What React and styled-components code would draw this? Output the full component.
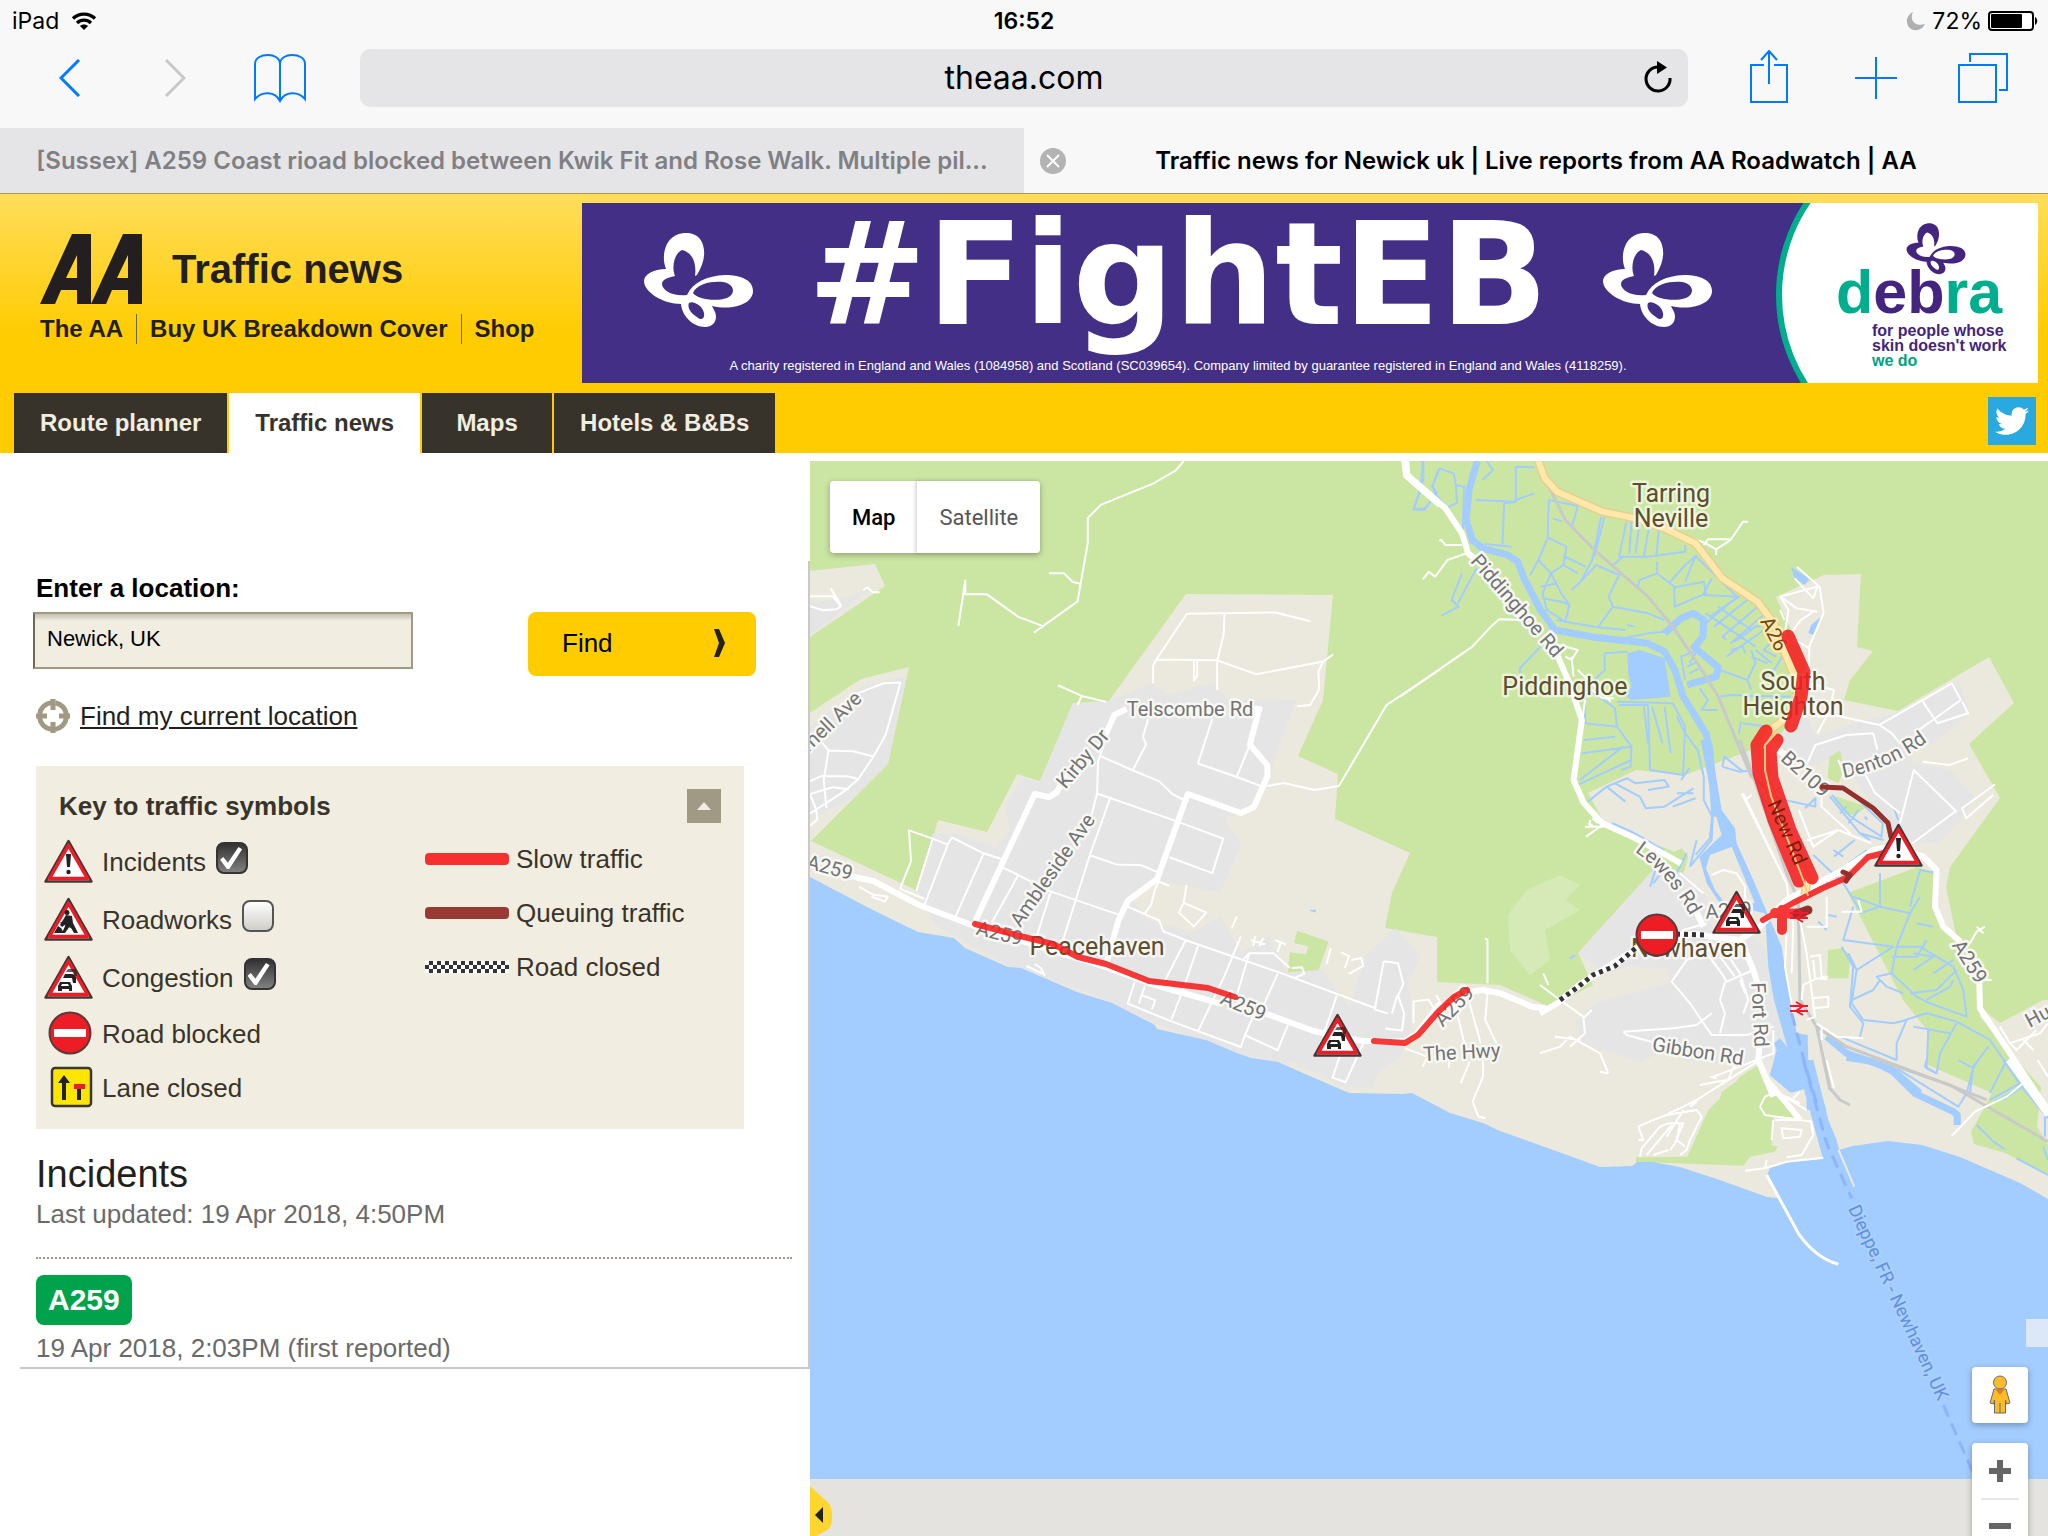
import React, { useState } from "react";
import styled, { createGlobalStyle } from "styled-components";
import { FaTwitter } from "react-icons/fa";

const GlobalStyle = createGlobalStyle`
	* {
		box-sizing: border-box;
	}
	body {
		margin: 0;
		background: #fff;
		font-family: "Liberation Sans", Arial, sans-serif;
	}
	button {
		border: 0;
		padding: 0;
		background: none;
		font-family: inherit;
	}
	h1, h2, p, ul {
		margin: 0;
		padding: 0;
		font-weight: normal;
	}
	a {
		color: inherit;
		text-decoration: none;
	}
`;

/* ---------- browser chrome ---------- */

const StatusBar = () => (
	<Status>
		<StatusSide>
			iPad
			<svg width="26" height="20" viewBox="0 0 26 20">
				<g fill="none" stroke="#000" strokeWidth="3.4">
					<path d="M2 7.5C8 1.6 18 1.6 24 7.5" />
					<path d="M6 12C10 8.2 16 8.2 20 12" />
				</g>
				<path d="M13 19L9 15C11 13 15 13 17 15Z" />
			</svg>
		</StatusSide>
		<Clock>16:52</Clock>
		<StatusSide $end>
			<svg width="20" height="20" viewBox="0 0 20 20">
				<path d="M7 1C-1 5-1 15 6 18.500C11 20.500 17 18 19 13C9 16 3 9 7 1Z" fill="#b0b0b0" />
			</svg>
			<span>72%</span>
			<svg width="50" height="20" viewBox="0 0 50 20">
				<rect x="1" y="1" width="44" height="18" rx="3" fill="#fff" stroke="#000" strokeWidth="2" />
				<rect x="3" y="3" width="31" height="14" rx="1" />
				<path d="M47 6C50 8 50 12 47 14Z" />
			</svg>
		</StatusSide>
	</Status>
);

const Toolbar = () => (
	<Tools>
		<Tool $w={105} aria-label="Back">
			<svg width="22" height="38" viewBox="0 0 22 38">
				<path d="M20 1L2 19L20 37" strokeWidth="3" />
			</svg>
		</Tool>
		<Tool $w={105} $off aria-label="Forward">
			<svg width="22" height="38" viewBox="0 0 22 38">
				<path d="M2 1L20 19L2 37" strokeWidth="3" />
			</svg>
		</Tool>
		<Tool $w={105} aria-label="Bookmarks">
			<svg width="52" height="50" viewBox="0 0 52 50">
				<path
					d="M26 48V11C26 5 20 2 14 2C7 2 1 5 1 11V46C8 38 21 38 26 48C31 38 44 38 51 46V11C51 5 45 2 38 2C32 2 26 5 26 11"
					strokeWidth="2"
				/>
			</svg>
		</Tool>
		<Address>
			<AddressInput aria-label="Address" defaultValue="theaa.com" />
			<Reload aria-label="Reload">
				<svg width="30" height="32" viewBox="0 0 30 32">
					<path d="M27 17A12 12 0 1 1 15 6" fill="none" stroke="#000" strokeWidth="3" />
					<path d="M14 0L24 6.500L14 13Z" />
				</svg>
			</Reload>
		</Address>
		<Tool $w={107} aria-label="Share">
			<svg width="40" height="56" viewBox="0 2 40 56">
				<path d="M15 17H2V54H38V17H25M20 36V4M12 12L20 3L28 12" strokeWidth="2" />
			</svg>
		</Tool>
		<Tool $w={107} aria-label="New tab">
			<svg width="42" height="42" viewBox="0 0 42 42">
				<path d="M21 0V42M0 21H42" strokeWidth="2" />
			</svg>
		</Tool>
		<Tool $w={107} aria-label="Show tabs">
			<svg width="50" height="50" viewBox="0 0 50 50">
				<path d="M1 12H38V49H1ZM12 9V1H49V37H41" strokeWidth="2" />
			</svg>
		</Tool>
	</Tools>
);

/* ---------- drawings ---------- */

const Butterfly = ({ width, height, color }) => (
	<svg width={width} height={height} viewBox="0 0 111 95" fill={color} fillRule="evenodd" aria-hidden="true">
		<path d="M54 42C60 32 63 22 60 12C56-4 32-4 24 11C20 19 20 28 23 36C11 36 1 41 1 48C1 59 20 71 38 71C39 83 50 94 62 94C71 94 75 86 72 79L69 73C92 78 110 70 110 58C110 47 98 42 82 42C64 43 50 49 44 62C30 64 19 57 19 51C19 46 27 44 32 43C28 33 32 20 39 17C48 19 54 28 52 43ZM50 60C54 50 70 48 80 49C92 51 93 61 84 65C72 69 54 66 50 60ZM46 70C50 67 60 73 61 80C62 86 58 88 54 84C48 80 44 75 46 70Z" />
	</svg>
);

const Logo = () => (
	<svg width="102" height="72" viewBox="0 0 102 72" fill="#231f20" fillRule="evenodd" role="img" aria-label="AA">
		<path d="M0 71L32 1H51V71H37V57H21L15 71ZM26 45H37V22Z" />
		<path d="M51 71L83 1H102V71H88V57H72L66 71ZM77 45H88V22Z" />
	</svg>
);

const glyphs = {
	incident: (
		<>
			<path d="M22 15H27L26 28H23Z" fill="#222" />
			<circle cx="24.500" cy="33" r="2.200" fill="#222" />
		</>
	),
	works: (
		<g fill="#222">
			<circle cx="23" cy="15.500" r="2.500" />
			<path d="M22 18L28 19L29 26L34 36H30L26 29L21 36H18L22 27L18 30L16 28Z" />
			<path d="M10 36L14 29L17 31L20 36ZM17 25L30 31L29 32L16 26Z" />
		</g>
	),
	queue: (
		<g fill="#222">
			<path d="M24 14H31L33 17V21H30V17H22Z" opacity=".7" />
			<path d="M21 19H29L32 22V28H29L28 23H19Z" />
			<path d="M16 27H26L28 31V36H25V34H18V36H14V31ZM18 29L17 31H25L24 29Z" fillRule="evenodd" />
		</g>
	),
};

const Sign = ({ kind, x, y }) => {
	if (kind === "blocked")
		return (
			<svg x={x} y={y} width="49" height="44" viewBox="0 0 49 44">
				<circle cx="26" cy="22" r="20.500" fill="#ee1c25" stroke="#5a3a3a" strokeWidth="2" />
				<path d="M10 18H42V26H10Z" fill="#fff" />
			</svg>
		);
	if (kind === "lane")
		return (
			<svg x={x} y={y} width="49" height="44" viewBox="0 0 49 44">
				<rect x="8" y="3" width="39" height="38" rx="3" fill="#ffe600" stroke="#3a372c" strokeWidth="2.500" />
				<path d="M18 35V18H14L20 10L26 18H22V35ZM33 24H37V35H33Z" fill="#222" />
				<path d="M30 19H41V24H30Z" fill="#ee1c25" />
			</svg>
		);
	return (
		<svg x={x} y={y} width="49" height="44" viewBox="0 0 49 44">
			<path d="M24.500 2L47.500 42.500H1.500Z" fill="#fff" stroke="#4a3434" strokeWidth="2.500" strokeLinejoin="round" />
			<path d="M24.500 6.500L43.500 39.500H5.500Z" fill="#fff" stroke="#ee1c25" strokeWidth="3.500" strokeLinejoin="round" />
			{glyphs[kind]}
		</svg>
	);
};

/* ---------- map ---------- */

// survey sheets: origin and scale on the map, then one path per layer
const sheets = [
	{
		at: "translate(0 0)",
		green:
			"M810 461H2048V1000L2043 1000L2000 1023L1983 1010L1977 987L1957 940L1946 887L1950 867L2000 798L1969 744L2014 703L1989 657L1898 711L1844 700L1850 680L1873 651L1857 647L1861 574L1824 575L1776 597L1805 660L1805 700L1790 737L1751 750L1685 775L1636 770L1588 793L1607 827L1665 848L1687 857L1655 868L1578 953L1593 985L1550 1007L1500 985L1437 982V937L1385 928L1392 893L1410 853L1335 819L1338 774L1298 756L1323 700L1333 595L1186 594L1108 702L1073 703L1040 781L1017 774L987 832L938 820L918 891L811 841L888 764L909 667L861 679L810 713V637L885 586L875 564L810 571ZM1848 893L1917 867L1937 873L1935 910L1957 940L1977 980L1980 1017L2017 1060L2041 1087L2037 1127L2048 1145V1175L2005 1153L1974 1144L1971 1132L1992 1093L1928 1065L1927 1030L1903 1000Z",
		pale: "M1527 890L1560 875L1580 885L1565 900L1580 910L1545 930L1550 960L1530 975L1510 950L1508 915Z",
		water:
			"M810 877L867 907L885 916L918 932L954 938L965 948L1008 967L1021 968L1077 992L1112 1003L1155 1025L1157 1029L1206 1040L1237 1053L1251 1058L1278 1062L1296 1070L1349 1093L1403 1094L1412 1093L1450 1113L1483 1123L1500 1131L1567 1155L1600 1167L1632 1166L1637 1162L1653 1162L1680 1167L1717 1179L1767 1197L1778 1198L1767 1175L1770 1168L1790 1162L1823 1159L1836 1138L1839 1150L1853 1146L1888 1141L1922 1145L1960 1157L2020 1183L2048 1199V1479H810Z",
	},
	{
		at: "translate(800 450) scale(.4082 .3954)",
		green:
			"M690 800L685 930L590 1035L655 880L640 860ZM1060 693L1076 697L1062 740L1045 735ZM1218 1216L1295 1243L1262 1340L1195 1325L1200 1270L1240 1275L1245 1255L1210 1247ZM710 1300L785 1345L745 1382L693 1365Z",
		built:
			"M24 385L110 375L180 345L24 470ZM24 700L150 600L262 570L215 793L130 880L24 935ZM668 640L760 635L860 590L900 620L1010 590L1050 630L1215 632L1145 830L1110 910L1040 930L1080 1000L1030 1120L880 1090L810 1130L850 1190L960 1220L1030 1180L1080 1270L1150 1230L1190 1320L1200 1568L1060 1520L870 1450L700 1370L500 1300L330 1200L290 1115L325 970L380 970L480 1005L515 960L500 900L545 830L590 840ZM640 860L690 800L685 930L590 1035Z",
		lane:
			"M940 28L920 52L865 85L738 138L705 172V235L680 383L573 462M388 445L405 330V365H458L535 422L597 446M610 312H647L668 334L685 338M24 370L80 370L100 395L90 403L55 405L24 395M75 350L100 392M155 355L165 347L178 360L195 360M24 838L52 825L115 825L143 832M143 615L205 590L246 588L210 720L180 775L143 832L110 862L24 920M52 738L70 760L130 762L180 775M70 760L58 835L65 905M24 870L80 853L120 858M24 870L40 910L42 935L24 950M865 590V545L873 530L948 414L1165 411L1250 433M1040 414L1038 465L1022 535V607M873 530L1022 532L1118 567L1282 535L1306 517M1282 535L1270 560L1272 605L1250 645L1218 648M965 530V585M973 532V570L965 585M632 595L690 622L750 637M690 622L680 645M738 775L815 810L880 838L912 870L945 888M853 680L840 725L848 745L815 810M1010 680L975 793L1070 827L1130 850M1100 750L1070 827M745 740L730 790L728 868L710 940M725 868L760 880L925 940L1037 983L1010 1070L905 1030M760 880L710 1025L635 1270M710 1025L775 1048L835 1050L875 1067M245 1110L272 1040L267 962L325 983L362 998M325 983L285 1115M362 998L372 980L450 1020L495 1035M362 998L305 1150M450 1020L380 1182M495 1055L535 1075L610 1115L780 1175M535 1075L470 1195M615 1115L580 1230M245 1110L305 1135M803 1155L880 1190L890 1217L945 1240L1170 1320L1410 1412M945 1240L890 1350M975 1255L940 1360L910 1440M1100 1275L1070 1380M1170 1325L1120 1440M1080 1230L1040 1330L975 1470M1085 1290L1100 1273H1160L1200 1310M880 1090L870 1110L860 1150L843 1175M875 1090L905 1102M947 1100L940 1145L928 1170L965 1205L995 1170L940 1145M1070 1180L1058 1210M820 1345L803 1400L910 1445L1080 1510L1090 1480L1170 1518L1195 1455M845 1355L830 1400M840 1380L870 1392L862 1415M1090 1480L1120 1410M1315 1380L1285 1470M1115 1230L1110 1255M1135 1235L1125 1255M1105 1240L1140 1250M1165 1240L1190 1250M1178 1245L1170 1270M1205 1310L1230 1308L1235 1325L1210 1335M1300 1260L1290 1300M1325 1270L1345 1280L1335 1310M1350 1290L1375 1285L1380 1305L1345 1325M1430 1293L1465 1298L1478 1350L1465 1380L1480 1425L1475 1468L1433 1463M1430 1293L1408 1415L1440 1425M1450 1425L1463 1380M1503 1450V1395L1540 1390L1555 1415M1145 850L1185 842L1260 860L1320 850L1437 645L1568 555M145 1105L180 1125L215 1130L208 1142L175 1130M575 1300L590 1310L600 1330M555 1305L595 1325",
		road: "M110 1075L180 1090L290 1150L430 1205L750 1308L860 1350L1030 1400M1140 1425L1260 1470L1380 1495L1480 1495L1510 1478L1568 1400M430 1190L575 870L610 878L630 865L650 820M740 740L770 670L800 655M1112 655H1125L1102 745L1145 797V825L1112 903L1080 918L950 870L875 1085L803 1140L780 1190L750 1300M1480 28L1485 65L1568 140",
		stream: "M1527 28V75L1503 150L1530 148L1560 110L1550 90L1565 50",
		water: "M1250 1163H1264V1170L1250 1166Z",
	},
	{
		at: "translate(800 840) scale(.4464 .3333)",
		built: "M1050 400L1170 390L1230 500L1270 340L1335 265L1365 310L1390 350L1365 420L1370 560L1345 650L1300 690L1280 745L1220 740L1060 640L1000 600Z",
		lane:
			"M1210 645L1193 713L1222 727L1262 610M1355 625L1405 650L1395 680M1455 660L1453 685M1500 665L1480 730M1530 660L1530 710L1507 785L1520 830L1535 835M1470 510L1490 620M1500 490L1525 610M1540 460L1535 540L1560 610M1425 465L1440 500M1540 430V300L1535 295",
		road: "M1470 480L1500 455L1530 450L1568 460L1640 500L1670 505",
	},
	{
		at: "translate(1400 450) scale(.4133 .3333)",
		green: "M1040 905L1065 900L1075 960L1060 1000L1035 985ZM1045 1035L1130 1070L1100 1095L1070 1090Z",
		built:
			"M915 860L950 810L985 805L1010 860L1100 820L1200 790L1350 690L1380 790L1290 880L1230 900L1240 940L1330 960L1390 1040L1350 1120L1300 1180L1200 1170L1120 1020L1085 960L1065 900L1010 945L940 930Z",
		water:
			"M550 610L580 600L640 625L655 740L560 750L545 735L560 710L552 670ZM945 350L990 385L980 405L955 385ZM1017 502L1000 555L988 550L995 525Z",
		river:
			"M187 33L167 120L160 210L175 270L200 295L260 315L285 335L300 385L340 480L375 540L470 562L600 580L640 605L665 660L685 740L740 850L750 900L755 980L762 1100M640 550L680 505L710 490L735 510L733 560L712 592L770 652L765 680L695 705",
		stream:
			"M210 33L225 60L200 90M95 55L130 70L135 105L155 110L152 240M95 55L78 110L90 140L115 172L138 158L135 105M55 33L50 120L33 178L60 180L85 130M280 50V150L325 130M280 50L325 52M183 150L280 155L252 160L248 283M205 282L270 290M360 150L357 265L335 330L315 375M360 150L420 165L430 170L415 235M357 262L403 290L395 345L365 370L335 330M395 318L450 350M395 345L430 370M365 370L390 430L410 465L400 515L380 510M365 370L345 430L355 480L400 515L470 530L545 540M340 410L380 400M345 445L390 455L410 465M487 200L465 330L437 395L415 420M495 200L470 320M437 395L475 345L530 375L505 440L515 470L480 530M370 205L392 215M548 215L530 320L600 320L650 312L690 305V285M560 215L555 310M580 215L570 310M605 215L590 320M628 220L620 320M515 345L540 320M622 335V370L580 390L575 410M622 370L665 412L735 395L740 430L665 470L663 412M650 400L690 345L715 318L690 395M715 318L815 440M755 385L735 430M515 470L600 490L640 510M550 525L568 530M640 545L600 550L520 570M735 435L820 440L750 500M815 440L740 520M840 450L760 530M865 470L780 560L790 570M885 490L800 580M900 520L860 530L810 575M740 490L860 590M770 470L850 540M880 540L790 620M910 560L880 600L910 620M860 600L900 640M930 610L905 660L885 680M850 600L860 640L840 690L775 660M800 600L830 590L835 610M775 740L800 735L855 738L945 740M840 690L850 720M890 640L850 620M465 725L520 775L525 830L560 890L558 950L535 960M448 740V820L525 830M445 870L520 860M525 755L660 760M530 765L600 765L605 960L685 975L690 830L660 760M590 770L600 880M610 770L635 880M640 770L655 910M440 910L560 890M430 1005L560 930M435 990L540 890M670 800L690 850L720 900L735 980V1050L755 1100L750 1165L715 1215M700 640L720 600L680 620L690 690M695 650L720 635M700 670L725 655M725 715L745 750L730 780L768 780M290 670V655L340 590M495 610L550 605M495 610L495 660L470 690M150 370L125 450L142 470L100 497M185 355L140 460M780 950L820 965L840 963M780 950L785 920L830 965M825 815L820 850M830 820L890 830M455 1055L500 1010L550 985L570 1000L640 990L650 1010L600 1020M500 1010L545 1055M520 1000L580 1040L595 1075L640 1070L710 1015M670 1030L710 1030M700 955L680 990M660 1070L715 1045M920 1010L900 1035L930 1050L1005 1070L1005 1045L980 1075M1045 1035L1090 1100L1165 1160L1168 1120L1100 1040M1085 1120L1110 1080M1125 1100L1130 1110M1050 1220L1100 1170M1085 1240L1130 1200M515 1120L560 1145L610 1180",
		rail: "M360 110L400 210L470 300L600 440L660 530L720 640L770 740L850 980L880 1010",
		lane:
			"M150 285L110 285L100 270L95 272M160 310L115 330L85 380L70 365L55 388M300 510L240 508L220 530L175 590L0 740M385 585L430 600L415 630L400 620M415 620L420 680M430 660L510 755M490 745H518M465 720L490 745M448 750L440 820M710 265L740 280L765 298L800 270L830 215H842M735 285L745 268H800M765 298V315M960 350L1015 410L1025 490L990 590V700L1050 720L1040 780L1010 850M955 385L1000 445L1010 410L920 440L960 475L1010 485M920 440L940 480L930 560M920 480L930 510M1000 485L970 510L945 550M950 570L970 580L990 595M1010 800L1050 795L1160 825L1335 700L1357 750L1255 840M1265 755L1300 820M1160 825L1190 850L1210 880M1145 850L1080 855L1005 885L985 940M1145 850L1155 900M1360 755L1375 790L1300 820M1120 960L1150 1030L1210 1090M1210 1120L1243 960L1345 1083L1240 1180M1265 935L1330 945L1375 925M1440 1003L1360 1075L1370 1105L1435 1035M965 1080L1000 1190L1060 1140M1020 1040L1020 1070L1090 1150M985 1170L1060 1140L1140 1180M830 1030L920 1260M1060 930L1075 970M490 1125L450 1160M455 1120L470 1130M465 1105L480 1120",
		road: "M15 33L18 75L110 175L150 250L165 310L190 335M375 600L410 700L440 810L420 990L445 1060L490 1120L570 1165L680 1240M900 890L940 920",
		main: "M335 33L350 85L380 125L490 185L570 205L640 235L715 280L780 385L865 455L905 520L925 590L955 680L962 740L940 800L895 840L878 880L885 980L910 1080L985 1290L980 1335",
	},
	{
		at: "translate(1540 740) scale(.3333)",
		green: "M864 630L905 625L932 645L925 715H862ZM540 1090L600 1010L655 975L690 1050L720 1100L700 1120H540ZM430 680L450 675L460 700L435 710ZM385 345L425 325L445 350L430 400L380 380Z",
		built:
			"M115 640L345 385L440 405L500 470L520 590L640 590L690 640L700 780L742 920L700 960L540 970L430 960L380 930L300 965L130 910L105 850L165 790L390 730L380 685L260 680L200 700Z",
		water:
			"M482 0L520 200L545 285L478 350L500 430L540 490L675 520L685 680L702 780L742 922L720 895L702 910L710 930L690 1005L755 1058L800 1045V1110H860L805 960L803 885L770 880L740 720L725 620L680 515L640 420L590 310L585 265L545 210L510 0ZM575 320L510 345L498 385L525 450L555 490L645 490Z",
		stream:
			"M520 200L515 300L450 380M470 300L450 380M215 250L300 290L370 330L350 380L330 440M340 430L380 375M90 655L105 645M440 340L410 400M865 525L890 530M835 545L860 570M905 620L940 680L930 800L970 850L960 890M925 640L950 690L935 790L970 840L1060 850L1100 840L1070 910V960L900 890M870 170L960 280L1030 300M900 220L920 200M960 280L990 300M820 345L910 430L960 510M880 330L910 350M885 410L910 390M940 470L1020 500L1110 520L1140 470M1020 400L1020 500L960 520M1110 520L1070 620L1055 700L1130 770L1170 790L1280 830L1270 750L1240 680L1140 620L1070 620M1130 550L1180 560M1055 650L1130 650L1160 600M950 690L1060 620L910 600L940 500M1180 700L1240 660M1110 760L1190 750L1250 690M1160 780L1230 740L1240 720M1055 700L1010 710L1040 740L1090 760M935 780L1000 750L1020 720M1120 640L1180 650L1120 690M1095 840L1160 820L1250 845L1350 900L1440 1030M1165 870L1160 985L1190 1000L1200 940L1250 850M1120 860L1230 880M1345 920L1300 980L1290 1060M1400 960L1350 1060M1440 1030L1350 1080M1190 400L1140 390L1110 500M860 440L860 420M1060 200L1075 240",
		river: "M860 890L920 940L1050 985L1140 1060",
		rail:
			"M600 0L640 110L740 400L775 480L780 780L830 860L870 1050M830 860L920 920L1240 1040L1340 1080",
		lane:
			"M605 160L740 430L745 470L735 680L760 820M615 180L635 165M750 480L760 560L755 700M780 540L800 640L825 830L800 840M740 480L700 520M800 560H860V470M810 650L840 645L845 710L865 710M820 660L825 715M785 780L790 735L830 715L862 718M820 775L865 770V800L820 805ZM845 860V900M830 850L890 890L970 895M905 515H965L955 480M515 405L550 390L590 400L615 440V480M420 400L490 460M500 550L430 570V585M555 590L495 640L440 660L395 725L450 790L515 885H620L700 860M555 725L540 780L555 820L540 880M500 640L545 700L560 725L640 690M540 650L585 710M560 640L600 700L625 780L610 820M250 875L400 865L470 855L515 820M250 875L260 885L350 910L380 900M520 1010L600 980L700 940V870M600 720L615 760M0 735L60 780L130 830L135 880L90 920M10 700L25 735M130 835L155 810M45 890L120 900M0 940L60 920L90 890L180 940L205 1000M135 260L190 260M150 260L150 240M1380 860L1410 910L1500 880L1524 850M1410 910L1430 930L1490 870M1450 900L1480 930M1290 610L1310 575L1335 560M1310 560L1330 580M1310 720H1355",
		road: "M0 820L60 785L110 740L290 625L460 582L500 588L600 600L660 560L740 480L900 395L1000 330L1060 320L1150 350L1190 390L1185 500L1210 560L1262 605M1318 720L1320 805L1500 1075L1524 1110M460 495L490 560M600 595L640 690L658 750M658 920L655 960L700 1070",
		ferry: "M755 820L800 990L830 1090",
	},
	{
		at: "translate(1600 1060) scale(.3333)",
		green:
			"M365 95L480 15L585 172L520 170L515 255L533 260L525 275L450 290L430 317L108 305V292L262 290L325 150L360 115Z",
		water: "M525 0H640L685 180L708 235L718 280L670 300L610 80L595 78L570 97L510 45Z",
		stream:
			"M1075 0L1120 25L1135 0M1120 25L1100 100L1075 140L890 25M980 0L975 20L1010 40M1185 125L1265 80L1210 0M1265 80L1344 175M1210 120L1280 70M1130 195L1180 245L1215 268M1250 295L1344 345M1335 170V230M1330 260L1344 300",
		river: "M740 -8L820 5L880 35L945 100L1060 155L1072 165V195",
		rail: "M820 -5L1050 75L1344 245M670 -5L690 85L720 120L750 135",
		lane:
			"M480 0L400 50L290 120L240 145L205 160M300 75L350 65L385 60L400 20L430 15M330 50L350 55M115 200L130 240L115 240M115 200L160 180L200 165L290 150L305 170L270 240L260 270L240 285M120 290L125 265L180 200L205 190L250 190L225 250L210 270M140 285L190 225L215 195M160 285L205 270M250 150L200 230M270 140L290 125M240 190L230 240L255 260M0 35L25 40M480 140L495 165L600 180L635 185L640 225L605 285L560 292M520 180L515 240M525 180H600M545 205L605 210L600 230L550 235ZM480 140L495 110L530 95L620 150M560 110L600 130M600 95L580 115M640 225L630 180M435 332L495 325L500 300M495 325L560 305L670 293M680 0L702 85M1055 228L1125 155L1220 110L1275 65M1313 0L1344 50",
		road: "M475 0L500 60L560 130L600 180M1225 0L1344 165",
		pier: "M500 345L595 520C630 570 670 600 715 613",
		jetty: "M716 270L763 380",
		ferry: "M610 0L680 250L755 415M1030 1035L1120 1240",
	},
];

const layers = [
	["green", { fill: "#cbe6a3" }],
	["pale", { fill: "#d6eab8" }],
	["built", { fill: "#e5e5e5" }],
	["water", { fill: "#a3ccff", fillRule: "evenodd" }],
	["river", { stroke: "#a3ccff", strokeWidth: 7 }],
	["stream", { stroke: "#a3ccff", strokeWidth: 2 }],
	["rail", { stroke: "#c8c9c9", strokeWidth: 3 }],
	["lane", { stroke: "#fff", strokeWidth: 2 }],
	["road", { stroke: "#fff", strokeWidth: 6 }],
	["pier", { stroke: "#fff", strokeWidth: 3 }],
	["jetty", { stroke: "#ebe8dd", strokeWidth: 2 }],
	["ferry", { stroke: "#8db5fa", strokeWidth: 3, strokeDasharray: "13 7" }],
	["main", { stroke: "#e5cf91", strokeWidth: 9 }],
	["main", { stroke: "#ffe8a9", strokeWidth: 6 }],
];

const roadNames = [
	["Telscombe Rd", 1190, 716, 0],
	["Kirby Dr", 1088, 763, -50],
	["Ambleside Ave", 1058, 874, -55],
	["A259", 828, 874, 15],
	["A259", 998, 940, 14],
	["A259", 1241, 1012, 22],
	["A259", 1459, 1011, -46],
	["The Hwy", 1462, 1059, -3],
	["Piddinghoe Rd", 1512, 610, 49],
	["B2109", 1801, 779, 42],
	["A259", 1729, 917, -4],
	["Fort Rd", 1753, 1015, 87],
	["Gibbon Rd", 1697, 1058, 9],
	["A259", 1964, 965, 58],
	["Hu", 2041, 1022, -28],
];

const townNames = [
	["Tarring", 1671, 502],
	["Neville", 1671, 527],
	["Piddinghoe", 1565, 695],
	["South", 1793, 690],
	["Heighton", 1793, 715],
	["Peacehaven", 1097, 955],
	["Newhaven", 1689, 957],
];

const closure = "M1560 1000L1578 987L1593 975L1615 966L1637 947M1676 934L1705 935";

const turn = (x, y, a) => `rotate(${a} ${x} ${y})`;

const TrafficMap = () => (
	<MapSvg viewBox="810 461 1238 1075" preserveAspectRatio="xMinYMin slice" role="img" aria-label="Traffic map">
		<rect x="810" y="461" width="1238" height="1075" fill="#ebe8dd" />
		{layers.map(([name, paint], i) =>
			sheets
				.filter((sheet) => sheet[name])
				.map((sheet) => <MapPath key={sheet.at + i} transform={sheet.at} d={sheet[name]} {...paint} />)
		)}
		<rect x="810" y="1479" width="1238" height="57" fill="#e5e3df" />

		<RoadLabel>
			{roadNames.map(([name, x, y, a]) => (
				<text key={name + x} x={x} y={y} transform={turn(x, y, a)}>
					{name}
				</text>
			))}
			<text x="863" y="700" textAnchor="end" transform={turn(863, 700, -44)}>
				rnell Ave
			</text>
			<path id="denton" d="M1838 779Q1892 770 1932 738" stroke="none" />
			<path id="lewes" d="M1629 848Q1666 870 1694 922" stroke="none" />
			<text>
				<textPath href="#denton" startOffset="50%">
					Denton Rd
				</textPath>
			</text>
			<text>
				<textPath href="#lewes" startOffset="50%">
					Lewes Rd
				</textPath>
			</text>
		</RoadLabel>
		<RoadLabel $color="#6d4a1c" $halo="#ffe8a9">
			<text x="1768" y="637" transform={turn(1768, 637, 62)}>
				A26
			</text>
		</RoadLabel>
		<RoadLabel $color="#6190dd" $halo="#a9cffc" $size={18}>
			<text x="1893" y="1305" transform={turn(1893, 1305, 65)}>
				Dieppe, FR - Newhaven, UK
			</text>
		</RoadLabel>
		<TownLabel>
			{townNames.map(([name, x, y]) => (
				<text key={name} x={x} y={y}>
					{name}
				</text>
			))}
		</TownLabel>

		<g fill="none" stroke="#f41f1f" strokeLinecap="round" strokeLinejoin="round" opacity=".88">
			<path
				d="M975 924L1028 938L1053 944L1078 957L1106 964L1149 981L1208 988L1235 997M1374 1041L1405 1043L1418 1035L1438 1012L1454 997L1467 990"
				strokeWidth="6"
			/>
			<path
				d="M1788 636L1804 672L1801 697L1791 726M1766 731L1757 745L1759 773L1774 820L1799 881M1777 740L1770 751L1772 778L1790 830L1812 878"
				strokeWidth="13"
			/>
			<path d="M1763 920L1793 903L1823 888L1848 877L1868 857L1884 853" strokeWidth="6" />
			<path d="M1775 913L1802 914M1782 910V930" strokeWidth="10" />
		</g>
		<path
			d="M1777 732L1765 745L1765 770L1771 796L1804 882L1808 896"
			fill="none"
			stroke="#fcc98a"
			strokeWidth="2"
		/>
		<g fill="none" stroke="#96302c" strokeLinecap="round" strokeLinejoin="round">
			<path d="M1822 787L1843 788L1873 808L1888 823L1891 837M1843 872L1850 875L1846 881" strokeWidth="5" />
			<path d="M1797 914L1808 910" strokeWidth="9" />
		</g>
		<g stroke="#ee1c2e" strokeWidth="2" fill="none">
			<path d="M1790 1006H1808M1790 1011H1808M1796 1002L1803 1006L1796 1011L1803 1015" />
			<path d="M1790 913H1808M1790 918H1808M1796 909L1803 913L1796 918L1803 922" />
		</g>
		<RoadLabel $color="#7d1c0c" $halo="none">
			<text x="1781" y="835" transform={turn(1781, 835, 66)}>
				New Rd
			</text>
		</RoadLabel>
		<g fill="none">
			<path d={closure} stroke="#fff" strokeWidth="6" />
			<path d={closure} stroke="#333" strokeWidth="5" strokeDasharray="4 4" />
		</g>

		<Sign kind="queue" x="1313" y="1013" />
		<Sign kind="blocked" x="1631" y="913" />
		<Sign kind="queue" x="1712" y="890" />
		<Sign kind="incident" x="1874" y="823" />
	</MapSvg>
);

/* ---------- page ---------- */

const navItems = ["Route planner", "Traffic news", "Maps", "Hotels & B&Bs"];

const symbols = [
	{ kind: "incident", name: "Incidents", on: true },
	{ kind: "works", name: "Roadworks", on: false },
	{ kind: "queue", name: "Congestion", on: true },
	{ kind: "blocked", name: "Road blocked" },
	{ kind: "lane", name: "Lane closed" },
];

const App = () => {
	const [place, setPlace] = useState("Newick, UK");
	return (
		<Page>
			<GlobalStyle />
			<StatusBar />
			<Toolbar />
			<Tabs>
				<Tab>
					<TabTitle>
						[Sussex] A259 Coast rioad blocked between Kwik Fit and Rose Walk. Multiple pil...
					</TabTitle>
				</Tab>
				<Tab $active>
					<CloseTab aria-label="Close tab">
						<svg width="26" height="26" viewBox="0 0 26 26">
							<circle cx="13" cy="13" r="13" fill="#b3b3b3" />
							<path d="M7 7L19 19M19 7L7 19" stroke="#fff" strokeWidth="2" />
						</svg>
					</CloseTab>
					<TabTitle>Traffic news for Newick uk | Live reports from AA Roadwatch | AA</TabTitle>
				</Tab>
			</Tabs>

			<Header>
				<Masthead>
					<Brand>
						<BrandRow>
							<Logo />
							<SiteTitle>Traffic news</SiteTitle>
						</BrandRow>
						<BrandLinks>
							<a href="#aa">The AA</a>
							<a href="#cover">Buy UK Breakdown Cover</a>
							<a href="#shop">Shop</a>
						</BrandLinks>
					</Brand>
					<Banner href="#debra">
						<BannerMain>
							<BannerRow>
								<Butterfly width="111" height="95" color="#fff" />
								<Slogan>#FightEB</Slogan>
								<Butterfly width="111" height="95" color="#fff" />
							</BannerRow>
							<Charity>
								A charity registered in England and Wales (1084958) and Scotland (SC039654). Company
								limited by guarantee registered in England and Wales (4118259).
							</Charity>
						</BannerMain>
						<Debra>
							<DebraCurve viewBox="0 0 264 180">
								<circle cx="170" cy="92" r="165" fill="#fff" stroke="#00ae8d" strokeWidth="6" />
							</DebraCurve>
							<DebraText>
								<DebraMark>
									<Butterfly width="60" height="52" color="#43257f" />
								</DebraMark>
								<DebraName>
									d<em>eb</em>ra
								</DebraName>
								<DebraLine>for people whose</DebraLine>
								<DebraLine>skin doesn't work</DebraLine>
								<DebraLine $green>we do</DebraLine>
							</DebraText>
						</Debra>
					</Banner>
				</Masthead>
				<Nav>
					{navItems.map((item) => (
						<NavLink key={item} href="#nav" $active={item === "Traffic news"}>
							{item}
						</NavLink>
					))}
					<Twitter href="#twitter" aria-label="Twitter">
						<FaTwitter size={34} />
					</Twitter>
				</Nav>
			</Header>

			<Main>
				<Sidebar>
					<Panel>
						<FieldLabel htmlFor="location">Enter a location:</FieldLabel>
						<SearchRow>
							<LocationInput id="location" value={place} onChange={(e) => setPlace(e.target.value)} />
							<FindButton>
								Find
								<svg width="12" height="30" viewBox="0 0 12 30">
									<path d="M1 1H6L12 15L6 29H1L6 15Z" fill="#222" />
								</svg>
							</FindButton>
						</SearchRow>
						<Locate href="#locate">
							<svg width="34" height="34" viewBox="0 0 34 34" fill="none" stroke="#a09a85">
								<circle cx="17" cy="17" r="13.500" strokeWidth="5" strokeDasharray="17 4.200" strokeDashoffset="-2" />
								<path d="M17 0V11M17 23V34M0 17H11M23 17H34" strokeWidth="5" />
							</svg>
							<span>Find my current location</span>
						</Locate>

						<KeyBox>
							<KeyHead>
								<KeyTitle>Key to traffic symbols</KeyTitle>
								<Collapse aria-label="Collapse key">
									<svg width="14" height="8" viewBox="0 0 14 8">
										<path d="M7 0L14 8H0Z" fill="#f2ede1" />
									</svg>
								</Collapse>
							</KeyHead>
							<KeyLists>
								<KeyList>
									{symbols.map(({ kind, name, on }) => (
										<KeyRow key={kind} $tall={on !== undefined}>
											<Sign kind={kind} />
											{on === undefined ? (
												<KeyName as="span">{name}</KeyName>
											) : (
												<>
													<KeyName htmlFor={kind}>{name}</KeyName>
													<Check id={kind} type="checkbox" defaultChecked={on} />
												</>
											)}
										</KeyRow>
									))}
								</KeyList>
								<KeyList>
									<LineRow>
										<Swatch $color="#f62f2f" />
										Slow traffic
									</LineRow>
									<LineRow>
										<Swatch $color="#983a33" />
										Queuing traffic
									</LineRow>
									<LineRow>
										<ClosedSwatch />
										Road closed
									</LineRow>
								</KeyList>
							</KeyLists>
						</KeyBox>

						<SectionTitle>Incidents</SectionTitle>
						<Muted>Last updated: 19 Apr 2018, 4:50PM</Muted>
						<Divider />
						<RoadBadge>A259</RoadBadge>
						<Muted>19 Apr 2018, 2:03PM (first reported)</Muted>
					</Panel>
				</Sidebar>
				<MapPane>
					<TrafficMap />
					<MapTypes>
						<MapType $active>Map</MapType>
						<MapType>Satellite</MapType>
					</MapTypes>
					<Slip />
					<MapControls>
						<MapButton aria-label="Street View">
							<svg width="24" height="40" viewBox="0 0 24 40" fill="#fbbc2c" stroke="#6b6b6b" strokeWidth="1">
								<path d="M6 14H18L22 28L18.500 29L17.500 25V38H6.500V25L5.500 29L2 28Z" />
								<path d="M12 28V38" />
								<path d="M7 14H17L12 20Z" fill="#e5811e" stroke="none" />
								<circle cx="12" cy="7.500" r="6.500" />
							</svg>
						</MapButton>
						<ZoomBox>
							<ZoomButton aria-label="Zoom in">
								<svg width="22" height="22" viewBox="0 0 22 22">
									<path d="M8 0H14V8H22V14H14V22H8V14H0V8H8Z" />
								</svg>
							</ZoomButton>
							<ZoomButton aria-label="Zoom out">
								<svg width="22" height="22" viewBox="0 0 22 22">
									<path d="M0 8H22V14H0Z" />
								</svg>
							</ZoomButton>
						</ZoomBox>
					</MapControls>
					<Drawer aria-label="Hide panel">
						<svg width="22" height="50" viewBox="0 0 22 50">
							<path d="M0 0L14 13Q22 18 22 28V34Q22 42 14 46L6 50H0Z" fill="#ffd530" />
							<path d="M13 21V37L5 29Z" fill="#222" />
						</svg>
					</Drawer>
				</MapPane>
			</Main>
		</Page>
	);
};

const Page = styled.div`
	display: flex;
	flex-direction: column;
	height: 100vh;
	overflow: hidden;
`;

const Status = styled.div`
	display: grid;
	grid-template-columns: 1fr auto 1fr;
	align-items: center;
	height: 40px;
	padding: 2px 12px 0;
	background: #f8f8f8;
	font: 400 23px Inter, sans-serif;
`;
const StatusSide = styled.div`
	display: flex;
	align-items: center;
	justify-content: ${(p) => (p.$end ? "flex-end" : "flex-start")};
	gap: ${(p) => (p.$end ? "6px" : "12px")};
	> svg {
		flex: none;
	}
	> svg:last-child {
		margin-right: ${(p) => (p.$end ? "-2px" : "0")};
	}
`;
const Clock = styled.span`
	font-weight: 600;
`;

const Tools = styled.div`
	display: flex;
	align-items: center;
	height: 88px;
	padding: 0 12px 12px 17px;
	background: #f8f8f8;
`;
const Tool = styled.button`
	flex: 0 0 ${(p) => p.$w}px;
	display: flex;
	justify-content: center;
	fill: none;
	stroke: ${(p) => (p.$off ? "#c8c8c8" : "#007aff")};
`;
const Address = styled.div`
	position: relative;
	flex: 1;
	margin: 0 27px 0 28px;
`;
const AddressInput = styled.input`
	display: block;
	width: 100%;
	height: 58px;
	padding: 0 60px 2px;
	border: 0;
	border-radius: 10px;
	background: #e5e5e8;
	text-align: center;
	font: 400 32px Inter, sans-serif;
`;
const Reload = styled.button`
	position: absolute;
	top: 12px;
	right: 15px;
`;

const Tabs = styled.div`
	display: grid;
	grid-template-columns: 1fr 1fr;
	height: 66px;
	border-bottom: 1px solid #a99955;
`;
const Tab = styled.div`
	min-width: 0;
	display: flex;
	align-items: center;
	padding: ${(p) => (p.$active ? "0 42px 0 16px" : "0 24px")};
	background: ${(p) => (p.$active ? "#f8f8f8" : "#e5e5e8")};
	color: ${(p) => (p.$active ? "#000" : "#808083")};
	font: 600 24px Inter, sans-serif;
`;
const CloseTab = styled.button`
	display: flex;
`;
const TabTitle = styled.span`
	flex: 1;
	overflow: hidden;
	text-align: center;
	white-space: nowrap;
	text-overflow: ellipsis;
`;

const Header = styled.header`
	background: linear-gradient(#ffdd5b 0, #ffcc02 140px);
	color: #231f20;
`;
const Masthead = styled.div`
	display: flex;
	padding: 9px 10px 10px 0;
`;
const Brand = styled.div`
	flex: 0 0 582px;
	padding: 30px 0 0 40px;
`;
const BrandRow = styled.div`
	display: flex;
	align-items: center;
	gap: 30px;
`;
const SiteTitle = styled.h1`
	font-size: 40px;
	font-weight: 700;
	line-height: 66px;
`;
const BrandLinks = styled.div`
	display: flex;
	margin-top: 9px;
	font-size: 24px;
	font-weight: 700;
	line-height: 30px;
	> a + a {
		margin-left: 13px;
		padding-left: 13px;
		border-left: 1px solid #6b6650;
	}
`;

const Banner = styled.a`
	flex: 1;
	display: flex;
	height: 180px;
	background: #442f87;
	color: #fff;
`;
const BannerMain = styled.span`
	flex: 1;
	display: flex;
	flex-direction: column;
	align-items: center;
`;
const BannerRow = styled.span`
	display: flex;
	align-items: center;
	gap: 54px;
	height: 154px;
	> svg {
		flex: none;
	}
`;
const Slogan = styled.span`
	padding-bottom: 10px;
	font: 700 142px/142px "DejaVu Sans", sans-serif;
`;
const Charity = styled.span`
	font-size: 13px;
	line-height: 18px;
	white-space: nowrap;
`;
const Debra = styled.span`
	position: relative;
	flex: 0 0 264px;
	overflow: hidden;
`;
const DebraCurve = styled.svg`
	position: absolute;
	inset: 0;
	width: 100%;
	height: 100%;
`;
const DebraText = styled.span`
	position: relative;
	display: flex;
	flex-direction: column;
	padding: 20px 32px 0 98px;
	color: #43257f;
`;
const DebraMark = styled.span`
	height: 38px;
	padding-left: 34px;
`;
const DebraName = styled.span`
	margin-left: -36px;
	color: #00ae8d;
	font-size: 61px;
	font-weight: 700;
	line-height: 62px;
	> em {
		color: #43257f;
		font-style: normal;
	}
`;
const DebraLine = styled.span`
	color: ${(p) => (p.$green ? "#00a184" : "#43257f")};
	font-size: 16px;
	font-weight: 700;
	line-height: 15px;
	white-space: nowrap;
`;

const Nav = styled.nav`
	display: flex;
	gap: 2px;
	height: 60px;
	padding: 0 12px 0 14px;
`;
const NavLink = styled.a`
	display: flex;
	align-items: center;
	justify-content: center;
	min-width: 130px;
	padding: 0 26px;
	background: ${(p) => (p.$active ? "#fff" : "#38332a")};
	color: ${(p) => (p.$active ? "#38332a" : "#f2ede1")};
	font-size: 24px;
	font-weight: 700;
`;
const Twitter = styled.a`
	display: flex;
	align-items: center;
	justify-content: center;
	width: 48px;
	height: 48px;
	margin: 4px 0 0 auto;
	background: #2aa9e0;
	color: #fff;
`;

const Main = styled.main`
	flex: 1;
	min-height: 0;
	display: flex;
	padding-top: 8px;
`;
const Sidebar = styled.aside`
	flex: 0 0 810px;
	padding: 100px 0 0 20px;
`;
const Panel = styled.div`
	padding: 11px 16px 3px;
	border-right: 2px solid #c9c9c9;
	border-bottom: 2px solid #c9c9c9;
	font-size: 26px;
	line-height: 32px;
`;
const FieldLabel = styled.label`
	display: block;
	font-weight: 700;
`;
const SearchRow = styled.div`
	display: flex;
	gap: 115px;
	margin: 8px 0 0 -3px;
`;
const LocationInput = styled.input`
	width: 380px;
	height: 57px;
	padding: 0 12px 4px;
	border: 2px solid #a09a85;
	border-left-color: #6f6a58;
	border-radius: 0;
	background: linear-gradient(#c4bfb0 0, #f2ede1 7px);
	font: 22px "Liberation Sans", Arial, sans-serif;
`;
const FindButton = styled.button`
	display: flex;
	align-items: center;
	justify-content: space-between;
	width: 228px;
	height: 64px;
	padding: 0 31px 2px 34px;
	border-radius: 8px;
	background: #ffcc00;
	color: #000;
	font-size: 26px;
`;
const Locate = styled.a`
	display: flex;
	align-items: center;
	gap: 10px;
	margin-top: 23px;
	color: #231f20;
	> span {
		text-decoration: underline;
	}
`;

const KeyBox = styled.section`
	margin: 33px 48px 0 0;
	padding: 23px 23px 15px 8px;
	background: #f2ede1;
	color: #38342a;
`;
const KeyHead = styled.div`
	display: flex;
	align-items: center;
	justify-content: space-between;
	padding-left: 15px;
`;
const KeyTitle = styled.h2`
	font-size: 26px;
	font-weight: 700;
`;
const Collapse = styled.button`
	display: flex;
	align-items: center;
	justify-content: center;
	width: 34px;
	height: 34px;
	background: #a09a85;
`;
const KeyLists = styled.div`
	display: flex;
	margin-top: 9px;
`;
const KeyList = styled.ul`
	list-style: none;
	&:first-child {
		flex: 0 0 381px;
	}
`;
const KeyRow = styled.li`
	display: flex;
	align-items: center;
	gap: 9px;
	height: ${(p) => (p.$tall ? "58px" : "54px")};
`;
const KeyName = styled.label`
	padding-top: 2px;
`;
const LineRow = styled.li`
	display: flex;
	align-items: center;
	gap: 7px;
	height: 54px;
`;
const Check = styled.input`
	appearance: none;
	position: relative;
	width: 32px;
	height: 32px;
	margin: 0 0 6px 1px;
	border: 2px solid #555;
	border-radius: 8px;
	background: linear-gradient(#fff, #d0cec8);
	&:checked {
		border-color: #333;
		background: linear-gradient(#333, #808080);
	}
	&:checked::after {
		content: "";
		position: absolute;
		inset: 3px 3px 3px 2px;
		background: #fff;
		clip-path: polygon(0 58%, 14% 46%, 34% 72%, 80% 0, 96% 10%, 40% 100%, 30% 100%);
	}
`;
const Swatch = styled.span`
	width: 84px;
	height: 12px;
	border-radius: 4px;
	background: ${(p) => p.$color};
`;
const ClosedSwatch = styled(Swatch)`
	border-radius: 0;
	background: repeating-conic-gradient(#333 0 25%, #fff 0 50%) 0 0 / 8px 8px;
`;

const SectionTitle = styled.h2`
	margin: 23px 0 2px;
	color: #231f20;
	font-size: 38px;
	line-height: 44px;
`;
const Muted = styled.p`
	color: #6a6a6a;
`;
const Divider = styled.hr`
	margin: 27px 0 16px;
	border: 0;
	border-top: 2px dotted #a09a85;
`;
const RoadBadge = styled.strong`
	display: inline-block;
	margin-bottom: 7px;
	padding: 0 12px;
	border-radius: 8px;
	background: #00a34b;
	color: #fff;
	font-size: 30px;
	line-height: 50px;
`;

const MapPane = styled.section`
	position: relative;
	flex: 1;
	overflow: hidden;
	font-family: Roboto, sans-serif;
`;
const MapSvg = styled.svg`
	display: block;
	width: 100%;
	height: 100%;
`;
const MapPath = styled.path.attrs((p) => ({ fill: p.fill || "none" }))`
	vector-effect: non-scaling-stroke;
	stroke-linejoin: round;
`;
const RoadLabel = styled.g`
	fill: ${(p) => p.$color || "#737373"};
	stroke: ${(p) => p.$halo || "#f7f7f3"};
	stroke-width: 5px;
	stroke-linejoin: round;
	paint-order: stroke;
	font-size: ${(p) => p.$size || 20}px;
	text-anchor: middle;
	> path {
		fill: none;
	}
`;
const TownLabel = styled.g`
	fill: #5f4e2b;
	stroke: rgba(255, 255, 255, 0.6);
	stroke-width: 5px;
	stroke-linejoin: round;
	paint-order: stroke;
	font-size: 25px;
	text-anchor: middle;
`;
const MapTypes = styled.div`
	position: absolute;
	top: 20px;
	left: 20px;
	display: flex;
	border-radius: 4px;
	background: #fff;
	box-shadow: 0 2px 6px rgba(0, 0, 0, 0.3);
`;
const MapType = styled.button`
	height: 72px;
	padding: 0 22px;
	color: ${(p) => (p.$active ? "#000" : "#565656")};
	font-size: 22px;
	font-weight: ${(p) => (p.$active ? 500 : 400)};
	& + & {
		box-shadow: -2px 0 3px rgba(0, 0, 0, 0.15);
	}
`;
const MapControls = styled.div`
	position: absolute;
	right: 20px;
	bottom: -20px;
	display: flex;
	flex-direction: column;
	gap: 20px;
`;
const MapButton = styled.button`
	display: flex;
	align-items: center;
	justify-content: center;
	width: 56px;
	height: 56px;
	border-radius: 4px;
	background: #fff;
	box-shadow: 0 2px 6px rgba(0, 0, 0, 0.3);
`;
const ZoomBox = styled.div`
	padding: 0 9px;
	border-radius: 4px;
	background: #fff;
	box-shadow: 0 2px 6px rgba(0, 0, 0, 0.3);
`;
const ZoomButton = styled.button`
	display: flex;
	align-items: center;
	justify-content: center;
	width: 38px;
	height: 55px;
	fill: #666;
	& + & {
		height: 58px;
		padding-bottom: 4px;
		border-top: 2px solid #e6e6e6;
	}
`;
const Slip = styled.div`
	position: absolute;
	right: 0;
	bottom: 189px;
	width: 22px;
	height: 28px;
	background: #dce8f8;
`;
const Drawer = styled.button`
	position: absolute;
	left: 0;
	bottom: 0;
	display: flex;
`;

export default App;
